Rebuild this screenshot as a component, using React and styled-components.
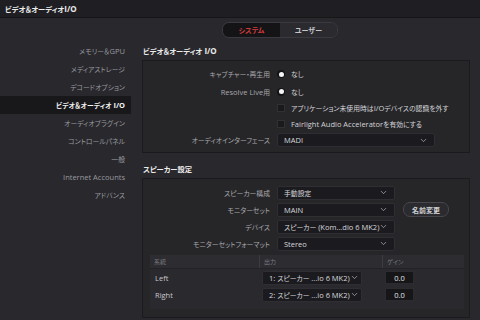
import React from 'react';
import styled, { createGlobalStyle } from 'styled-components';
import { ChevronDown } from 'lucide-react';

const Global = createGlobalStyle`
  html, body {
    margin: 0;
    padding: 0;
    background: #28282d;
    overflow: hidden;
  }
  body {
    font-family: 'Open Sans', 'Noto Sans CJK JP', sans-serif;
    font-size: 7.5px;
    font-feature-settings: "palt";
    color: #c8c8cc;
  }
`

// Japanese runs are set a touch smaller than the Latin ones, like the app does
const Ja = styled.span`
  font-size: 0.91em;
`

const CJK = /([\u3000-\u30ff\u4e00-\u9fff\uff00-\uffef]+)/

const T = ({ children }) =>
  String(children)
    .split(CJK)
    .map((part, i) => (i % 2 ? <Ja key={i}>{part}</Ja> : part))

const Window = styled.div`
  width: 480px;
  height: 320px;
  display: flex;
  flex-direction: column;
  background: #28282d;
`

const TitleBar = styled.div`
  height: 17px;
  flex: none;
  display: flex;
  align-items: center;
  padding-left: 5px;
  background: #1f1f23;
  border-bottom: 1px solid #161619;
  color: #ececec;
  font-weight: 700;
  font-size: 8px;
`

const TabsRow = styled.div`
  height: 24px;
  flex: none;
  display: flex;
  justify-content: center;
  align-items: flex-start;
  padding-top: 4px;
  padding-left: 80px;
  box-sizing: border-box;
`

const Segmented = styled.div`
  display: flex;
  height: 14px;
  border-radius: 7px;
  border: 1px solid #3a3a40;
  overflow: hidden;
`

const Seg = styled.div`
  width: 57px;
  display: flex;
  align-items: center;
  justify-content: center;
  font-size: 7px;
  font-weight: 700;
  color: ${p => (p.$active ? '#d23b3b' : '#c4c4c8')};
  background: ${p => (p.$active ? '#141416' : '#2a2a2f')};
`

const Main = styled.div`
  flex: 1;
  display: flex;
  min-height: 0;
`

const Sidebar = styled.div`
  width: 131px;
  flex: none;
  display: flex;
  flex-direction: column;
`

const NavItem = styled.div`
  height: 18px;
  line-height: 18px;
  text-align: right;
  padding-right: 6px;
  color: ${p => (p.$active ? '#f0f0f0' : '#9a9a9f')};
  background: ${p => (p.$active ? '#18181b' : 'transparent')};
  font-weight: ${p => (p.$active ? 700 : 400)};
`

const Content = styled.div`
  flex: 1;
  display: flex;
  flex-direction: column;
  padding: 0 10px 2px 11px;
  min-width: 0;
  min-height: 0;
`

const SectionTitle = styled.div`
  height: 18px;
  line-height: 18px;
  flex: none;
  padding-left: 1px;
  font-weight: 700;
  font-size: 8px;
  color: #ececec;
  margin-top: ${p => p.$gap || 0}px;
`

const Panel = styled.div`
  border: 1px solid #1b1b1f;
  background: #262629;
  padding: ${p => p.$pad || '4px 0'};
  flex: ${p => (p.$grow ? '1 1 auto' : 'none')};
  display: flex;
  flex-direction: column;
  min-height: 0;
`

const Row = styled.div`
  display: grid;
  grid-template-columns: 127px 1fr;
  column-gap: 7px;
  align-items: center;
  flex: none;
  height: ${p => p.$h || 17}px;
`

const Label = styled.div`
  text-align: right;
  color: #a8a8ac;
  white-space: nowrap;
`

const Control = styled.div`
  display: flex;
  align-items: center;
  gap: 6px;
  color: #d4d4d8;
  white-space: nowrap;
`

const Radio = styled.span`
  width: 8px;
  height: 8px;
  border-radius: 50%;
  background: #141416;
  display: flex;
  align-items: center;
  justify-content: center;
  &::after {
    content: '';
    width: 5px;
    height: 5px;
    border-radius: 50%;
    background: #f4f4f4;
  }
`

const Check = styled.span`
  width: 8px;
  height: 8px;
  background: #1a1a1d;
  border: 1px solid #303035;
  box-sizing: border-box;
`

const Select = styled.div`
  width: ${p => p.$w}px;
  height: 14px;
  box-sizing: border-box;
  display: flex;
  align-items: center;
  justify-content: space-between;
  padding: 0 6px;
  background: #1b1b1f;
  border: 1px solid #2e2e33;
  border-radius: 2px;
  color: #d8d8dc;
  white-space: nowrap;
  svg {
    color: #b0b0b4;
    flex: none;
  }
`

const PillButton = styled.div`
  height: 13px;
  padding: 0 8px;
  margin-left: 2px;
  border: 1px solid #46464c;
  border-radius: 7px;
  display: flex;
  align-items: center;
  font-weight: 700;
  font-size: 7px;
  color: #d0d0d4;
  background: #2a2a2f;
`

const Table = styled.div`
  margin: 3px 5px 0 7px;
  flex: 1 1 auto;
  display: flex;
  flex-direction: column;
  background: #29292e;
`

const TableHead = styled.div`
  height: 13px;
  flex: none;
  display: grid;
  grid-template-columns: 109px 123px 1fr;
  background: #2c2c31;
  border-bottom: 1px solid #232327;
`

const HeadCell = styled.div`
  display: flex;
  align-items: center;
  padding-left: 4px;
  font-size: 6px;
  color: #7c7c82;
  border-left: ${p => (p.$sep ? '1px solid #3c3c42' : 'none')};
`

const TableRow = styled.div`
  height: 17px;
  flex: none;
  display: grid;
  grid-template-columns: 109px 123px 1fr;
  align-items: center;
`

const Cell = styled.div`
  padding-left: ${p => p.$pl || 5}px;
  color: #c8c8cc;
  white-space: nowrap;
`

const GainBox = styled.div`
  width: 29px;
  height: 13px;
  display: flex;
  align-items: center;
  justify-content: center;
  background: #161618;
  border: 1px solid #2c2c30;
  box-sizing: border-box;
  color: #e4e4e8;
`

const navItems = [
  'メモリー＆GPU',
  'メディアストレージ',
  'デコードオプション',
  'ビデオ＆オーディオ I/O',
  'オーディオプラグイン',
  'コントロールパネル',
  '一般',
  'Internet Accounts',
  'アドバンス',
]

const channels = [
  { name: 'Left', out: '1: スピーカー ...io 6 MK2)' },
  { name: 'Right', out: '2: スピーカー ...io 6 MK2)' },
]

const Chev = () => <ChevronDown size={9} strokeWidth={2} />

export default function App() {
  return (
    <Window>
      <Global />
      <TitleBar><T>ビデオ＆オーディオ I/O</T></TitleBar>
      <TabsRow>
        <Segmented>
          <Seg $active>システム</Seg>
          <Seg>ユーザー</Seg>
        </Segmented>
      </TabsRow>
      <Main>
        <Sidebar>
          {navItems.map(n => (
            <NavItem key={n} $active={n === 'ビデオ＆オーディオ I/O'}><T>{n}</T></NavItem>
          ))}
        </Sidebar>
        <Content>
          <SectionTitle><T>ビデオ＆オーディオ I/O</T></SectionTitle>
          <Panel>
            <Row $h={18}>
              <Label><T>キャプチャー・再生用</T></Label>
              <Control><Radio /><T>なし</T></Control>
            </Row>
            <Row $h={17}>
              <Label><T>Resolve Live用</T></Label>
              <Control><Radio /><T>なし</T></Control>
            </Row>
            <Row $h={16}>
              <span />
              <Control><Check /><span><T>アプリケーション未使用時はI/Oデバイスの認識を外す</T></span></Control>
            </Row>
            <Row $h={16}>
              <span />
              <Control><Check /><span><T>Fairlight Audio Acceleratorを有効にする</T></span></Control>
            </Row>
            <Row $h={16}>
              <Label><T>オーディオインターフェース</T></Label>
              <Control><Select $w={158}>MADI<Chev /></Select></Control>
            </Row>
          </Panel>

          <SectionTitle $gap={7}><T>スピーカー設定</T></SectionTitle>
          <Panel $grow $pad="5px 0 8px">
            <Row>
              <Label><T>スピーカー構成</T></Label>
              <Control><Select $w={118}><span><T>手動設定</T></span><Chev /></Select></Control>
            </Row>
            <Row>
              <Label><T>モニターセット</T></Label>
              <Control>
                <Select $w={118}>MAIN<Chev /></Select>
                <PillButton>名前変更</PillButton>
              </Control>
            </Row>
            <Row>
              <Label><T>デバイス</T></Label>
              <Control><Select $w={118}><span><T>スピーカー (Kom...dio 6 MK2)</T></span><Chev /></Select></Control>
            </Row>
            <Row>
              <Label><T>モニターセットフォーマット</T></Label>
              <Control><Select $w={118}>Stereo<Chev /></Select></Control>
            </Row>
            <Table>
              <TableHead>
                <HeadCell>系統</HeadCell>
                <HeadCell $sep>出力</HeadCell>
                <HeadCell $sep>ゲイン</HeadCell>
              </TableHead>
              {channels.map(c => (
                <TableRow key={c.name}>
                  <Cell>{c.name}</Cell>
                  <Cell $pl={3}><Select $w={100}><span><T>{c.out}</T></span><Chev /></Select></Cell>
                  <Cell $pl={3}><GainBox>0.0</GainBox></Cell>
                </TableRow>
              ))}
            </Table>
          </Panel>
        </Content>
      </Main>
    </Window>
  );
}
